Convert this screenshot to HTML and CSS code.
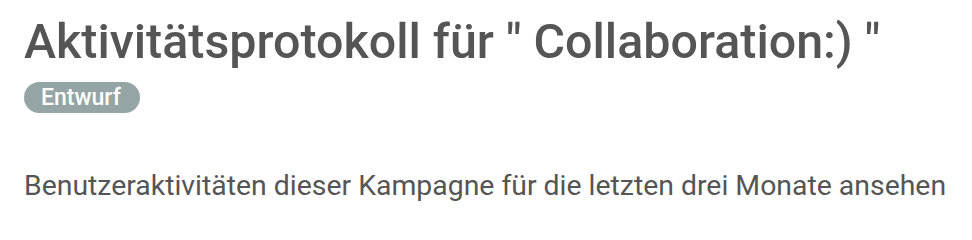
FILE: index.html
```html
<!DOCTYPE html>
<html lang="de">
<head>
<meta charset="utf-8">
<title>Aktivitätsprotokoll</title>
<link rel="stylesheet" href="styles.css">
</head>
<body>
<main class="page">
  <header class="head">
    <h1 class="title">Aktivitätsprotokoll für " Collaboration:) "</h1>
    <span class="badge">Entwurf</span>
  </header>
  <p class="desc">Benutzeraktivitäten dieser Kampagne für die letzten drei Monate ansehen</p>
</main>
</body>
</html>
```
FILE: styles.css
```css
html, body {
  margin: 0;
  padding: 0;
  background: #ffffff;
}
.page {
  font-family: Roboto, "Liberation Sans", sans-serif;
  color: #555555;
  padding: 14px 24px 0 24px;
}
.head {
  display: flex;
  flex-direction: column;
  align-items: flex-start;
  gap: 12px;
}
.title {
  margin: 0;
  font-size: 48.4px;
  font-weight: 500;
  line-height: 56px;
  color: #555555;
}
.badge {
  display: inline-block;
  background: #95a5a6;
  color: #ffffff;
  font-size: 23px;
  font-weight: 500;
  line-height: 31px;
  padding: 0 19px 0 17px;
  border-radius: 16px;
}
.desc {
  margin: 57px 0 0 0;
  font-size: 28.4px;
  line-height: 32px;
  color: #555555;
}
```
